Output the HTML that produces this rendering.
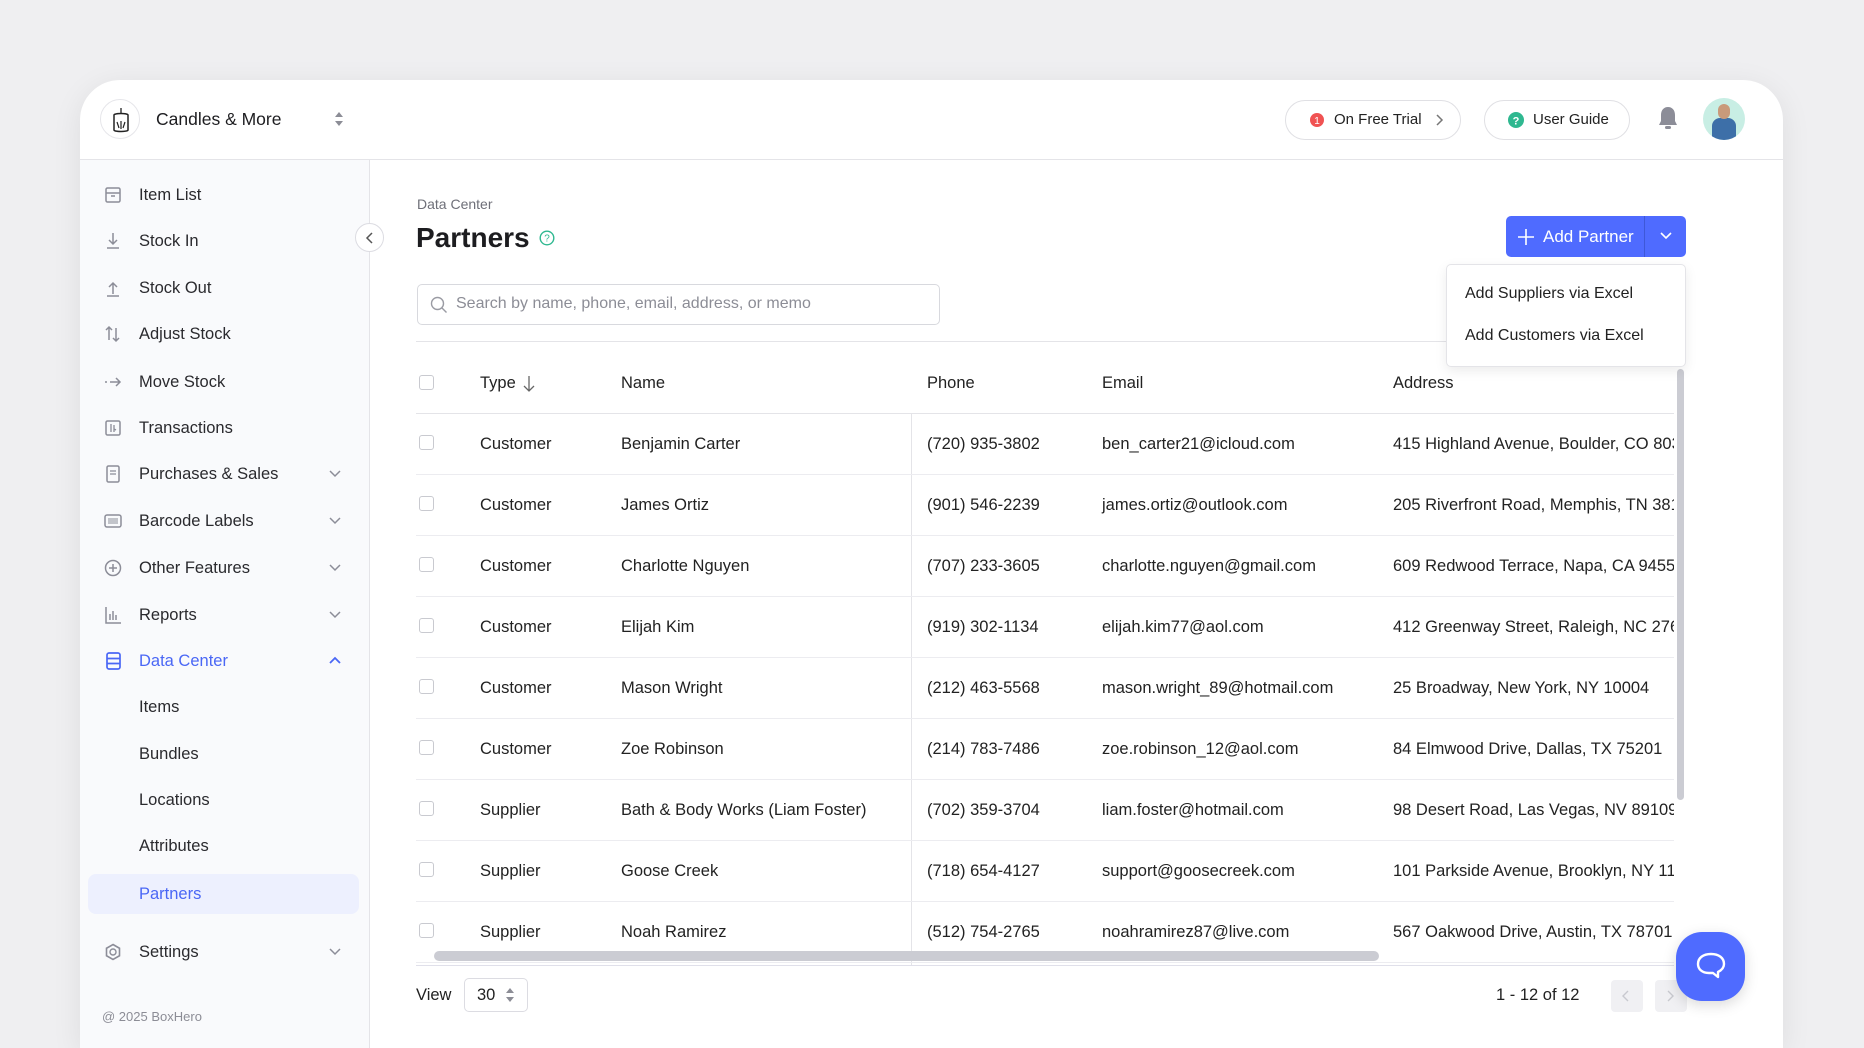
<!DOCTYPE html>
<html style="overflow:hidden;height:1048px"><head><meta charset="utf-8"><style>
*{box-sizing:border-box;margin:0;padding:0}
body{width:1864px;height:1048px;overflow:hidden;background:#efeff1;font-family:"Liberation Sans",sans-serif;color:#222;position:relative}
.a{position:absolute}
.card{left:80px;top:80px;width:1703px;height:968px;background:#fff;border-radius:40px 40px 0 0;box-shadow:0 6px 30px rgba(0,0,0,.08);overflow:hidden}
.side{left:0;top:80px;width:290px;height:888px;background:#f9fafc;border-right:1px solid #e4e4e8}
.hdr{left:0;top:79px;width:1703px;height:1px;background:#e4e4e8}
.si{position:absolute;left:0;width:290px;height:30px;font-size:16.5px;color:#2a2a2e;line-height:30px}
.si .ic{position:absolute;left:24px;top:6px;width:18px;height:18px}
.si .t{position:absolute;left:59px}
.si .ch{position:absolute;left:248px;top:7px}
.sub{position:absolute;left:59px;font-size:16.5px;color:#2a2a2e;line-height:30px}
.th{position:absolute;font-size:16.5px;color:#222;line-height:20px}
.row{position:absolute;left:336px;width:1258px;height:61px;border-bottom:1px solid #ececf0}
.row span{position:absolute;top:20px;font-size:16.5px;line-height:20px;color:#222;white-space:nowrap}
.cb{position:absolute;width:15px;height:15px;border:1.5px solid #c9cad0;border-radius:3px;background:#fff}
.pill{position:absolute;height:40px;border:1.5px solid #e0e0e4;border-radius:20px;font-size:15px;line-height:37px;color:#222}
</style></head><body>
<div class="a card">
 <div class="a hdr"></div>
 <div class="a" style="left:20px;top:19px;width:40px;height:40px;border-radius:50%;border:1px solid #e6e6ea;background:#fff">
  <svg width="40" height="40" viewBox="0 0 40 40"><path d="M20 8v5" stroke="#222" stroke-width="1.3"/><path d="M13 15c0-2 14-2 14 0v15c0 2-14 2-14 0z" fill="none" stroke="#222" stroke-width="1.5"/><path d="M16 22l2 6M24 22l-2 6M20 21v8" stroke="#222" stroke-width="1.2"/></svg>
 </div>
 <div class="a" style="left:76px;top:29px;font-size:17.5px;font-weight:500;color:#1d1d20">Candles &amp; More</div>
 <svg class="a" style="left:254px;top:30px" width="10" height="18"><path d="M1 7l4-5 4 5zM1 11l4 5 4-5z" fill="#8c8d96"/></svg>
 <div class="pill" style="left:1205px;top:20px;width:176px">
  <svg class="a" style="left:23px;top:11px" width="16" height="16"><circle cx="8" cy="8" r="7" fill="#f05252"/><text x="8" y="12" font-size="10" fill="#fff" text-anchor="middle" font-family="Liberation Sans">1</text></svg>
  <span class="a" style="left:48px">On Free Trial</span>
  <svg class="a" style="left:150px;top:13px" width="8" height="12"><path d="M1 1l5 5-5 5" fill="none" stroke="#777" stroke-width="1.5"/></svg>
 </div>
 <div class="pill" style="left:1404px;top:20px;width:146px">
  <svg class="a" style="left:23px;top:11px" width="16" height="16"><circle cx="8" cy="8" r="8" fill="#2fb890"/><text x="8" y="12.5" font-size="11" font-weight="bold" fill="#fff" text-anchor="middle" font-family="Liberation Sans">?</text></svg>
  <span class="a" style="left:48px">User Guide</span>
 </div>
 <svg class="a" style="left:1577px;top:25px" width="22" height="26"><path d="M11 2c-4 0-7 3-7 8v6l-2 4h18l-2-4v-6c0-5-3-8-7-8z" fill="#8c8d98"/><rect x="8" y="21" width="6" height="3" rx="1.5" fill="#8c8d98"/></svg>
 <div class="a" style="left:1623px;top:18px;width:42px;height:42px;border-radius:50%;background:#c8eee4;overflow:hidden">
  <div class="a" style="left:9px;top:20px;width:24px;height:26px;border-radius:8px 8px 0 0;background:#3d6fa8"></div>
  <div class="a" style="left:15px;top:6px;width:12px;height:15px;border-radius:6px;background:#c99a7a"></div>
 </div>
 <div class="a side">
  <div class="si" style="top:20px"><svg class="ic" viewBox="0 0 18 18"><rect x="2" y="2" width="14" height="14" rx="1.5" fill="none" stroke="#8c8d98" stroke-width="1.5"/><path d="M2 7h14M7 10h4" stroke="#8c8d98" stroke-width="1.5"/></svg><span class="t">Item List</span></div>
  <div class="si" style="top:66px"><svg class="ic" viewBox="0 0 18 18"><path d="M9 1v11M5 8l4 4 4-4M3 16h12" fill="none" stroke="#8c8d98" stroke-width="1.5"/></svg><span class="t">Stock In</span></div>
  <div class="si" style="top:113px"><svg class="ic" viewBox="0 0 18 18"><path d="M9 15V4M5 8l4-4 4 4M3 17h12" fill="none" stroke="#8c8d98" stroke-width="1.5"/></svg><span class="t">Stock Out</span></div>
  <div class="si" style="top:159px"><svg class="ic" viewBox="0 0 18 18"><path d="M5 15V2M2 5l3-3 3 3M12 3v13M9 13l3 3 3-3" fill="none" stroke="#8c8d98" stroke-width="1.5"/></svg><span class="t">Adjust Stock</span></div>
  <div class="si" style="top:207px"><svg class="ic" viewBox="0 0 18 18"><path d="M6 9h10M12 5l4 4-4 4" fill="none" stroke="#8c8d98" stroke-width="1.5"/><circle cx="2" cy="9" r="1" fill="#8c8d98"/></svg><span class="t">Move Stock</span></div>
  <div class="si" style="top:253px"><svg class="ic" viewBox="0 0 18 18"><rect x="2" y="2" width="14" height="14" rx="1.5" fill="none" stroke="#8c8d98" stroke-width="1.5"/><path d="M7 5v8M10 6v7M10 10l2 1" fill="none" stroke="#8c8d98" stroke-width="1.3"/></svg><span class="t">Transactions</span></div>
  <div class="si" style="top:299px"><svg class="ic" viewBox="0 0 18 18"><rect x="3" y="1" width="12" height="16" rx="1.5" fill="none" stroke="#8c8d98" stroke-width="1.5"/><path d="M6 6h6M6 9h6" stroke="#8c8d98" stroke-width="1.3"/></svg><span class="t">Purchases &amp; Sales</span><svg class="ch" width="14" height="14"><path d="M2 5l5 5 5-5" fill="none" stroke="#8c8d98" stroke-width="1.5"/></svg></div>
  <div class="si" style="top:346px"><svg class="ic" viewBox="0 0 18 18"><rect x="1" y="3" width="16" height="12" rx="2" fill="none" stroke="#8c8d98" stroke-width="1.5"/><path d="M5 6v6M7 6v6M9 6v6M11 6v6M13 6v6" stroke="#8c8d98" stroke-width="1"/></svg><span class="t">Barcode Labels</span><svg class="ch" width="14" height="14"><path d="M2 5l5 5 5-5" fill="none" stroke="#8c8d98" stroke-width="1.5"/></svg></div>
  <div class="si" style="top:393px"><svg class="ic" viewBox="0 0 18 18"><circle cx="9" cy="9" r="7.5" fill="none" stroke="#8c8d98" stroke-width="1.5"/><path d="M9 5v8M5 9h8" stroke="#8c8d98" stroke-width="1.5"/></svg><span class="t">Other Features</span><svg class="ch" width="14" height="14"><path d="M2 5l5 5 5-5" fill="none" stroke="#8c8d98" stroke-width="1.5"/></svg></div>
  <div class="si" style="top:440px"><svg class="ic" viewBox="0 0 18 18"><path d="M2 1v16h15M6 8v6M9 5v9M12 9v5" fill="none" stroke="#8c8d98" stroke-width="1.5"/></svg><span class="t">Reports</span><svg class="ch" width="14" height="14"><path d="M2 5l5 5 5-5" fill="none" stroke="#8c8d98" stroke-width="1.5"/></svg></div>
  <div class="si" style="top:486px;color:#4a67f5"><svg class="ic" viewBox="0 0 18 18"><rect x="3" y="1" width="13" height="16" rx="2" fill="none" stroke="#4a67f5" stroke-width="1.7"/><path d="M3 6.5h13M3 11.5h13" stroke="#4a67f5" stroke-width="1.7"/></svg><span class="t">Data Center</span><svg class="ch" width="14" height="14"><path d="M2 10l5-5 5 5" fill="none" stroke="#4a67f5" stroke-width="1.8"/></svg></div>
  <div class="sub" style="top:532px">Items</div>
  <div class="sub" style="top:579px">Bundles</div>
  <div class="sub" style="top:625px">Locations</div>
  <div class="sub" style="top:671px">Attributes</div>
  <div class="a" style="left:8px;top:714px;width:271px;height:40px;border-radius:8px;background:#edf0fe"></div>
  <div class="sub" style="top:719px;color:#4a67f5">Partners</div>
  <div class="si" style="top:777px"><svg class="ic" viewBox="0 0 18 18"><path d="M9 1.5l6.5 3.75v7.5L9 16.5l-6.5-3.75v-7.5z" fill="none" stroke="#8c8d98" stroke-width="1.6"/><circle cx="9" cy="9" r="3" fill="none" stroke="#8c8d98" stroke-width="1.4"/></svg><span class="t">Settings</span><svg class="ch" width="14" height="14"><path d="M2 5l5 5 5-5" fill="none" stroke="#8c8d98" stroke-width="1.5"/></svg></div>
  <div class="a" style="left:22px;top:849px;font-size:13px;color:#8c8d96">@ 2025 BoxHero</div>
 </div>
 <div class="a" style="left:275px;top:143px;width:29px;height:29px;border-radius:50%;background:#fff;border:1px solid #dcdce2"><svg class="a" style="left:9px;top:7px" width="10" height="14"><path d="M7 2L2 7l5 5" fill="none" stroke="#555" stroke-width="1.5"/></svg></div>
 <div class="a" style="left:337px;top:116px;font-size:14px;color:#6e6f78">Data Center</div>
 <div class="a" style="left:336px;top:142px;font-size:28px;font-weight:bold;color:#1d1d20">Partners</div>
 <svg class="a" style="left:459px;top:150px" width="16" height="16"><circle cx="8" cy="8" r="6.8" fill="none" stroke="#2fb890" stroke-width="1.4"/><text x="8" y="11.5" font-size="10" fill="#2fb890" text-anchor="middle" font-family="Liberation Sans">?</text></svg>
 <div class="a" style="left:337px;top:204px;width:523px;height:41px;border:1.5px solid #d8d9de;border-radius:5px">
  <svg class="a" style="left:12px;top:11px" width="18" height="18"><circle cx="7.5" cy="7.5" r="6" fill="none" stroke="#9a9ba3" stroke-width="1.4"/><path d="M12 12l4.5 4.5" stroke="#9a9ba3" stroke-width="1.4"/></svg>
  <span class="a" style="left:38px;top:10px;font-size:16px;color:#8c8d96">Search by name, phone, email, address, or memo</span>
 </div>
 <div class="a" style="left:336px;top:261px;width:1258px;height:1px;background:#e4e4e8"></div>
 <div class="a" style="left:1426px;top:136px;width:180px;height:41px;border-radius:5px;background:#4f6bff">
  <svg class="a" style="left:12px;top:13px" width="16" height="16"><path d="M8 0v16M0 8h16" stroke="#fff" stroke-width="1.6"/></svg>
  <span class="a" style="left:37px;top:11px;color:#fff;font-size:17px;font-weight:500">Add Partner</span>
  <div class="a" style="left:138px;top:0;width:1px;height:41px;background:#3e58d8"></div>
  <svg class="a" style="left:154px;top:15px" width="12" height="10"><path d="M1 2l5 5 5-5" fill="none" stroke="#fff" stroke-width="1.6"/></svg>
 </div>
 <div class="cb" style="left:339px;top:295px"></div>
 <div class="th" style="left:400px;top:293px">Type</div>
 <svg class="a" style="left:443px;top:295px" width="12" height="18"><path d="M6 1v15M1 11l5 5 5-5" fill="none" stroke="#666" stroke-width="1.3"/></svg>
 <div class="th" style="left:541px;top:293px">Name</div>
 <div class="th" style="left:847px;top:293px">Phone</div>
 <div class="th" style="left:1022px;top:293px">Email</div>
 <div class="th" style="left:1313px;top:293px">Address</div>
 <div class="a" style="left:336px;top:333px;width:1258px;height:1px;background:#e4e4e8"></div>
 <div class="a" style="left:831px;top:334px;width:1px;height:552px;background:#e4e4e8"></div>
 <div class="a" style="left:336px;top:334px;width:1258px;height:552px;overflow:hidden">
 <div class="row" style="left:0;top:0"><div class="cb" style="left:3px;top:21px"></div><span style="left:64px">Customer</span><span style="left:205px">Benjamin Carter</span><span style="left:511px">(720) 935-3802</span><span style="left:686px">ben_carter21@icloud.com</span><span style="left:977px">415 Highland Avenue, Boulder, CO 80302</span></div>
 <div class="row" style="left:0;top:61px"><div class="cb" style="left:3px;top:21px"></div><span style="left:64px">Customer</span><span style="left:205px">James Ortiz</span><span style="left:511px">(901) 546-2239</span><span style="left:686px">james.ortiz@outlook.com</span><span style="left:977px">205 Riverfront Road, Memphis, TN 38103</span></div>
 <div class="row" style="left:0;top:122px"><div class="cb" style="left:3px;top:21px"></div><span style="left:64px">Customer</span><span style="left:205px">Charlotte Nguyen</span><span style="left:511px">(707) 233-3605</span><span style="left:686px">charlotte.nguyen@gmail.com</span><span style="left:977px">609 Redwood Terrace, Napa, CA 94559</span></div>
 <div class="row" style="left:0;top:183px"><div class="cb" style="left:3px;top:21px"></div><span style="left:64px">Customer</span><span style="left:205px">Elijah Kim</span><span style="left:511px">(919) 302-1134</span><span style="left:686px">elijah.kim77@aol.com</span><span style="left:977px">412 Greenway Street, Raleigh, NC 27601</span></div>
 <div class="row" style="left:0;top:244px"><div class="cb" style="left:3px;top:21px"></div><span style="left:64px">Customer</span><span style="left:205px">Mason Wright</span><span style="left:511px">(212) 463-5568</span><span style="left:686px">mason.wright_89@hotmail.com</span><span style="left:977px">25 Broadway, New York, NY 10004</span></div>
 <div class="row" style="left:0;top:305px"><div class="cb" style="left:3px;top:21px"></div><span style="left:64px">Customer</span><span style="left:205px">Zoe Robinson</span><span style="left:511px">(214) 783-7486</span><span style="left:686px">zoe.robinson_12@aol.com</span><span style="left:977px">84 Elmwood Drive, Dallas, TX 75201</span></div>
 <div class="row" style="left:0;top:366px"><div class="cb" style="left:3px;top:21px"></div><span style="left:64px">Supplier</span><span style="left:205px">Bath &amp; Body Works (Liam Foster)</span><span style="left:511px">(702) 359-3704</span><span style="left:686px">liam.foster@hotmail.com</span><span style="left:977px">98 Desert Road, Las Vegas, NV 89109</span></div>
 <div class="row" style="left:0;top:427px"><div class="cb" style="left:3px;top:21px"></div><span style="left:64px">Supplier</span><span style="left:205px">Goose Creek</span><span style="left:511px">(718) 654-4127</span><span style="left:686px">support@goosecreek.com</span><span style="left:977px">101 Parkside Avenue, Brooklyn, NY 11225</span></div>
 <div class="row" style="left:0;top:488px"><div class="cb" style="left:3px;top:21px"></div><span style="left:64px">Supplier</span><span style="left:205px">Noah Ramirez</span><span style="left:511px">(512) 754-2765</span><span style="left:686px">noahramirez87@live.com</span><span style="left:977px">567 Oakwood Drive, Austin, TX 78701</span></div>
 </div>
 <div class="a" style="left:1597px;top:289px;width:7px;height:431px;border-radius:4px;background:#cbccd3"></div>
 <div class="a" style="left:354px;top:871px;width:945px;height:10px;border-radius:5px;background:#cbccd3"></div>
 <div class="a" style="left:336px;top:885px;width:1258px;height:1px;background:#e0e0ea"></div>
 <div class="a" style="left:336px;top:906px;font-size:16.5px">View</div>
 <div class="a" style="left:384px;top:898px;width:64px;height:34px;border:1.5px solid #dcdce2;border-radius:5px"><span class="a" style="left:12px;top:7px;font-size:16.5px">30</span><svg class="a" style="left:40px;top:8px" width="10" height="16"><path d="M1 6l4-5 4 5zM1 10l4 5 4-5z" fill="#8c8d96"/></svg></div>
 <div class="a" style="left:1416px;top:906px;font-size:16.5px">1 - 12 of 12</div>
 <div class="a" style="left:1531px;top:900px;width:32px;height:32px;border-radius:4px;background:#f0f0f3"><svg class="a" style="left:11px;top:10px" width="8" height="12"><path d="M6 1L1 6l5 5" fill="none" stroke="#c8c9cf" stroke-width="1.4"/></svg></div>
 <div class="a" style="left:1575px;top:900px;width:32px;height:32px;border-radius:4px;background:#f0f0f3"><svg class="a" style="left:12px;top:10px" width="8" height="12"><path d="M1 1l5 5-5 5" fill="none" stroke="#c8c9cf" stroke-width="1.4"/></svg></div>
</div>
<div class="a" style="left:1446px;top:264px;width:240px;height:103px;background:#fff;border:1px solid #e4e4e8;border-radius:5px;box-shadow:0 4px 12px rgba(0,0,0,.08)">
 <div class="a" style="left:18px;top:20px;font-size:16px;color:#222">Add Suppliers via Excel</div>
 <div class="a" style="left:18px;top:62px;font-size:16px;color:#222">Add Customers via Excel</div>
</div>
<div class="a" style="left:1676px;top:932px;width:69px;height:69px;border-radius:26px;background:#4f6bff;box-shadow:0 4px 14px rgba(0,0,0,.15)">
 <svg class="a" style="left:18px;top:19px" width="34" height="32"><path d="M17 3C9 3 4 7 4 13c0 5 4 9 11 9l4 0 5 4v-5c4-2 6-5 6-8 0-6-5-10-13-10z" fill="none" stroke="#fff" stroke-width="2.4" stroke-linejoin="round"/></svg>
</div>
</body></html>
